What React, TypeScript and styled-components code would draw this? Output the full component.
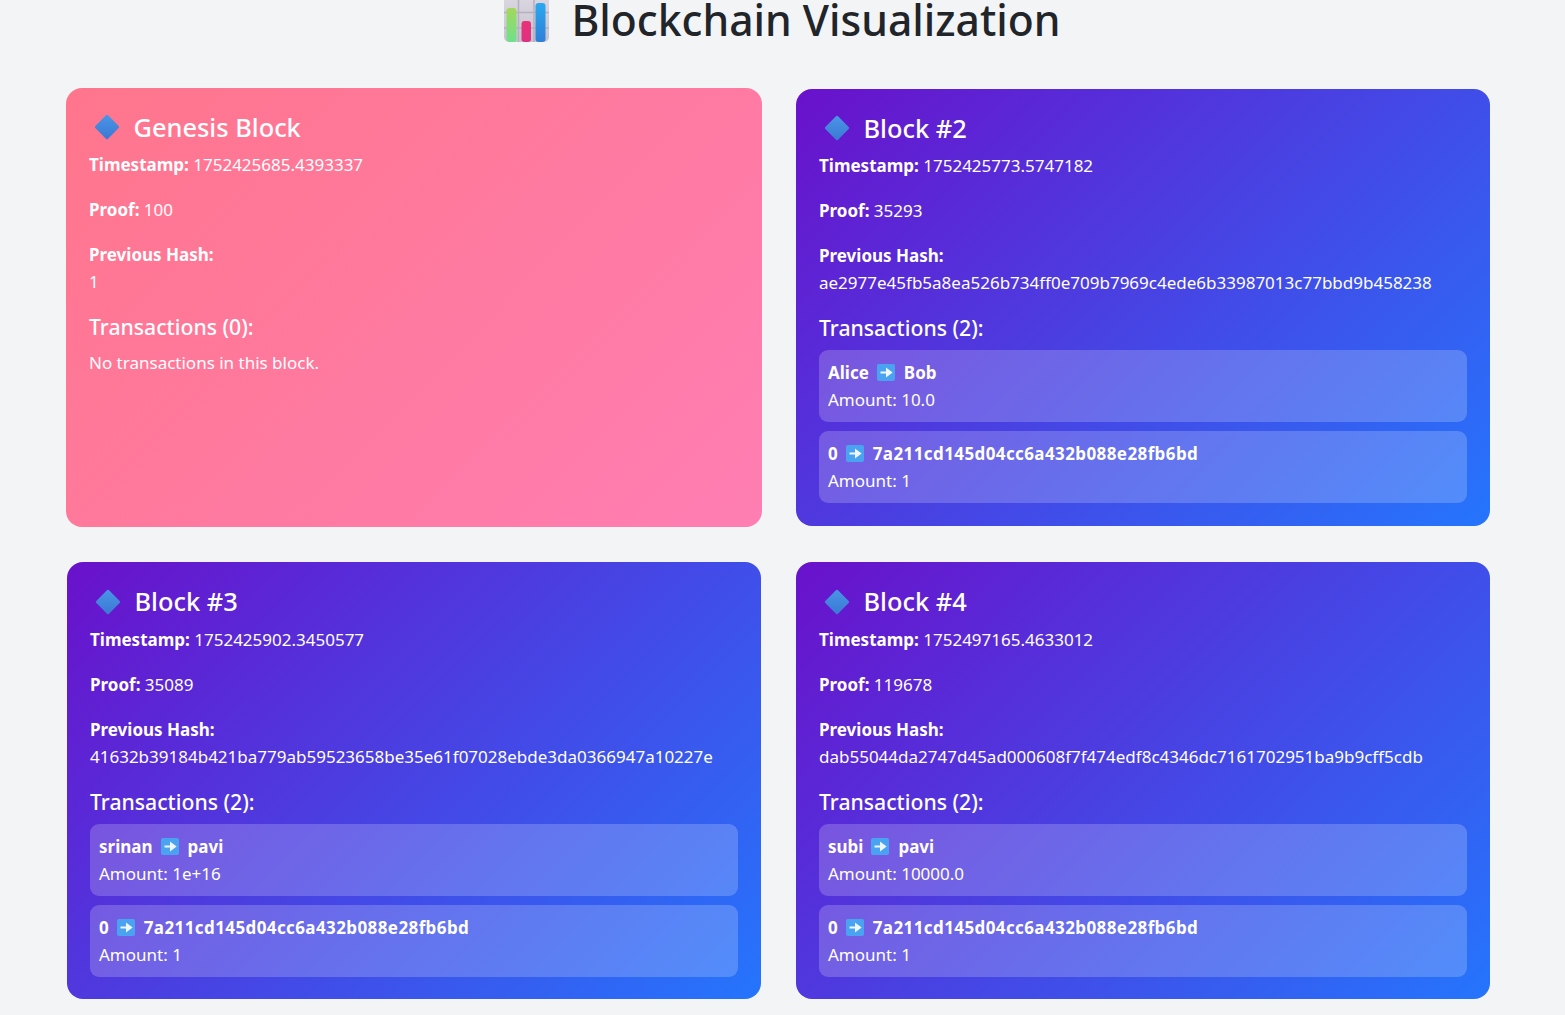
import React from "react";
import styled, { createGlobalStyle } from "styled-components";

const Global = createGlobalStyle`
  html, body { margin: 0; padding: 0; height: 100%; overflow: hidden; background: #f3f4f6; }
  body { font-family: "Noto Sans", "Open Sans", sans-serif; font-size: 17px; line-height: 27px; color: #fff; }
`;

const Page = styled.div`
  height: 1015px;
  overflow: hidden;
  padding: 0 75px 0 67px;
  box-sizing: border-box;
`;

const Title = styled.h1`
  display: flex;
  align-items: center;
  justify-content: center;
  gap: 22px;
  height: 38px;
  margin: 0 -75px 50.7px -67px;
  font-size: 42.6px;
  line-height: 38px;
  font-weight: 500;
  color: #212529;
`;

const Grid = styled.div`
  display: grid;
  grid-template-columns: 694px 694px;
  grid-auto-rows: 437px;
  gap: 36.4px 35px;
`;

const Card = styled.section<{ $genesis?: boolean }>`
  padding: 23px;
  border-radius: 16px;
  background: ${(p) =>
    p.$genesis
      ? "linear-gradient(135deg, #ff758c, #ff7eb3)"
      : "linear-gradient(135deg, #6a11cb, #2575fc)"};
  margin: ${(p) => (p.$genesis ? "-1px" : "0")};
`;

const BlockTitle = styled.h2`
  display: flex;
  align-items: center;
  gap: 12.5px;
  box-sizing: border-box;
  margin: 0;
  height: 40.5px;
  padding: 0 0 7px 4px;
  font-size: 25.4px;
  line-height: 33.5px;
  font-weight: 500;
`;

const Field = styled.p`
  margin: 0 0 18px;
`;

const Hash = styled.span`
  display: block;
`;

const Label = styled.strong`
  font-weight: 700;
`;

const TxHeading = styled.h3`
  box-sizing: border-box;
  margin: 0 0 4px;
  height: 32px;
  padding-bottom: 4px;
  font-size: 21.2px;
  line-height: 28px;
  font-weight: 500;
`;

const Tx = styled.div`
  height: 54px;
  padding: 9px;
  margin-bottom: 9px;
  border-radius: 9px;
  background: rgba(255, 255, 255, 0.2);
`;

const TxParties = styled.div`
  display: flex;
  align-items: center;
  gap: 8px;
  font-weight: 700;
`;

const Party = styled.span<{ $address?: boolean }>`
  letter-spacing: ${(p) => (p.$address ? "0.4px" : "0")};
`;

const Empty = styled.p`
  margin: 0;
`;

const ChartSvg = styled.svg`
  flex: none;
  width: 45px;
  height: 42px;
  margin-top: 4px;
`;

const DiamondSvg = styled.svg`
  flex: none;
  width: 28px;
  height: 28px;
`;

const ArrowSvg = styled.svg`
  flex: none;
  width: 18px;
  height: 17px;
  margin-right: 1px;
`;

const ChartIcon = () => (
  <ChartSvg viewBox="0 0 45 42">
    <defs>
      <linearGradient id="g0" x1="0" y1="0" x2="0" y2="1"><stop offset="0" stopColor="#dcd8e2" /><stop offset="1" stopColor="#c6c3d0" /></linearGradient>
      <linearGradient id="g1" x1="0" y1="0" x2="0" y2="1"><stop offset="0" stopColor="#a3d85a" /><stop offset="1" stopColor="#6fe08c" /></linearGradient>
      <linearGradient id="g2" x1="0" y1="0" x2="0" y2="1"><stop offset="0" stopColor="#e8327a" /><stop offset="1" stopColor="#e0307f" /></linearGradient>
      <linearGradient id="g3" x1="0" y1="0" x2="0" y2="1"><stop offset="0" stopColor="#2aa8f0" /><stop offset="1" stopColor="#2f7fd8" /></linearGradient>
    </defs>
    <rect x="0" y="-6" width="45" height="48" rx="5" fill="url(#g0)" />
    <path d="M14.5 -6V42M30 -6V42M0 12.5H45M0 28H45" stroke="#b4b0bc" strokeWidth="1.5" fill="none" />
    <rect x="2.5" y="8" width="10" height="34" rx="3" fill="url(#g1)" />
    <rect x="17.5" y="21" width="9.5" height="21" rx="3" fill="url(#g2)" />
    <rect x="31.5" y="3" width="10" height="39" rx="3" fill="url(#g3)" />
  </ChartSvg>
);

const DiamondIcon = () => (
  <DiamondSvg viewBox="0 0 28 28">
    <defs>
      <linearGradient id="d" x1="0" y1="0" x2="1" y2="1"><stop offset="0" stopColor="#4a96e6" /><stop offset="1" stopColor="#3a78d4" /></linearGradient>
    </defs>
    <rect x="5" y="5" width="18" height="18" rx="1.5" transform="rotate(45 14 14)" fill="url(#d)" />
  </DiamondSvg>
);

const ArrowIcon = () => (
  <ArrowSvg viewBox="0 0 18 17">
    <rect width="18" height="17" rx="2" fill="#4aa3f0" />
    <path d="M3.5 8.5H13M10 5.5L14 8.5L10 11.5Z" stroke="#eef6ff" strokeWidth="2" fill="#eef6ff" />
  </ArrowSvg>
);

type Transaction = { from: string; to: string; amount: string; reward?: boolean };
type Block = {
  title: string;
  genesis?: boolean;
  timestamp: string;
  proof: string;
  prev: string;
  txs: Transaction[];
};

const rewardTx: Transaction = { from: "0", to: "7a211cd145d04cc6a432b088e28fb6bd", amount: "1", reward: true };

const blocks: Block[] = [
  { title: "Genesis Block", genesis: true, timestamp: "1752425685.4393337", proof: "100", prev: "1", txs: [] },
  {
    title: "Block #2",
    timestamp: "1752425773.5747182",
    proof: "35293",
    prev: "ae2977e45fb5a8ea526b734ff0e709b7969c4ede6b33987013c77bbd9b458238",
    txs: [{ from: "Alice", to: "Bob", amount: "10.0" }, rewardTx],
  },
  {
    title: "Block #3",
    timestamp: "1752425902.3450577",
    proof: "35089",
    prev: "41632b39184b421ba779ab59523658be35e61f07028ebde3da0366947a10227e",
    txs: [{ from: "srinan", to: "pavi", amount: "1e+16" }, rewardTx],
  },
  {
    title: "Block #4",
    timestamp: "1752497165.4633012",
    proof: "119678",
    prev: "dab55044da2747d45ad000608f7f474edf8c4346dc7161702951ba9b9cff5cdb",
    txs: [{ from: "subi", to: "pavi", amount: "10000.0" }, rewardTx],
  },
];

export default function App() {
  return (
    <Page>
      <Global />
      <Title>
        <ChartIcon />
        Blockchain Visualization
      </Title>
      <Grid>
        {blocks.map((b) => (
          <Card key={b.title} $genesis={b.genesis}>
            <BlockTitle>
              <DiamondIcon />
              {b.title}
            </BlockTitle>
            <Field><Label>Timestamp:</Label> {b.timestamp}</Field>
            <Field><Label>Proof:</Label> {b.proof}</Field>
            <Field>
              <Label>Previous Hash:</Label>
              <Hash>{b.prev}</Hash>
            </Field>
            <TxHeading>Transactions ({b.txs.length}):</TxHeading>
            {b.txs.length === 0 && <Empty>No transactions in this block.</Empty>}
            {b.txs.map((t) => (
              <Tx key={t.from + t.to}>
                <TxParties>
                  {t.from}
                  <ArrowIcon />
                  <Party $address={t.reward}>{t.to}</Party>
                </TxParties>
                Amount: {t.amount}
              </Tx>
            ))}
          </Card>
        ))}
      </Grid>
    </Page>
  );
}
